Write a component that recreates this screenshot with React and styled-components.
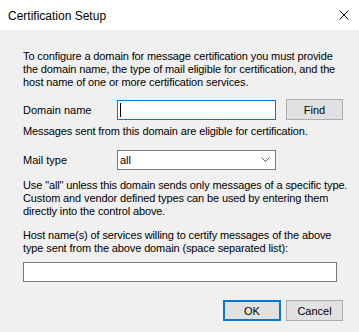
import React from 'react'
import styled, { createGlobalStyle } from 'styled-components'

const GlobalStyle = createGlobalStyle`
  html, body {
    margin: 0;
    padding: 0;
    background: #f0f0f0;
  }
  * {
    box-sizing: border-box;
  }
`

const CloseIcon = () => (
  <svg width="10" height="10" viewBox="0 0 10 10">
    <path d="M0.5 0.5 L9.5 9.5 M9.5 0.5 L0.5 9.5" stroke="#000" strokeWidth="1" fill="none" />
  </svg>
)

const Chevron = () => (
  <svg width="9" height="5" viewBox="0 0 9 5">
    <path d="M0.5 0.5 L4.5 4.5 L8.5 0.5" stroke="#555" strokeWidth="1" fill="none" />
  </svg>
)

// each paragraph is kept on the same line breaks as the dialog
const Lines = ({ top, lines }) => (
  <StyledText $top={top}>
    {lines.map((l, i) => <StyledLine key={i}>{l}</StyledLine>)}
  </StyledText>
)

const App = () => {
  return (
    <>
      <GlobalStyle />
      <StyledWindow>
        <StyledTitleBar>
          <StyledTitle>Certification Setup</StyledTitle>
          <StyledClose><CloseIcon /></StyledClose>
        </StyledTitleBar>
        <StyledBody>
          <Lines top={20} lines={[
            'To configure a domain for message certification you must provide',
            'the domain name, the type of mail eligible for certification, and the',
            'host name of one or more certification services.',
          ]} />

          <StyledRow $top={10}>
            <StyledLabel>Domain name</StyledLabel>
            <StyledField $focused>
              <StyledCaret />
            </StyledField>
            <StyledButton $side>Find</StyledButton>
          </StyledRow>

          <Lines top={5} lines={[
            'Messages sent from this domain are eligible for certification.',
          ]} />

          <StyledRow $top={11}>
            <StyledLabel>Mail type</StyledLabel>
            <StyledField>
              <StyledValue>all</StyledValue>
              <StyledDrop><Chevron /></StyledDrop>
            </StyledField>
          </StyledRow>

          <Lines top={9} lines={[
            'Use "all" unless this domain sends only messages of a specific type.',
            'Custom and vendor defined types can be used by entering them',
            'directly into the control above.',
          ]} />

          <Lines top={11} lines={[
            'Host name(s) of services willing to certify messages of the above',
            'type sent from the above domain (space separated list):',
          ]} />

          <StyledWideField />

          <StyledFooter>
            <StyledButton $primary>OK</StyledButton>
            <StyledButton>Cancel</StyledButton>
          </StyledFooter>
        </StyledBody>
      </StyledWindow>
    </>
  )
}

export default App

const StyledWindow = styled.div`
  width: 359px;
  height: 332px;
  display: flex;
  flex-direction: column;
  background: #f0f0f0;
  font-family: "Liberation Sans", Arial, sans-serif;
  font-size: 11px;
  color: #000;
  overflow: hidden;
`

const StyledTitleBar = styled.div`
  height: 30px;
  flex: none;
  background: #fff;
  display: flex;
  align-items: center;
  justify-content: space-between;
  padding: 0 10px 0 8px;
`

const StyledTitle = styled.div`
  font-size: 12px;
  padding-top: 1px;
`

const StyledClose = styled.div`
  display: flex;
  padding-bottom: 1px;
`

const StyledBody = styled.div`
  display: flex;
  flex-direction: column;
  padding: 0 16px 0 23px;
`

const StyledText = styled.div`
  margin-top: ${p => p.$top}px;
  line-height: 13px;
  letter-spacing: -0.12px;
`

const StyledLine = styled.div`
  white-space: nowrap;
`

const StyledRow = styled.div`
  margin-top: ${p => p.$top}px;
  display: flex;
  align-items: center;
  height: 21px;
`

const StyledLabel = styled.div`
  width: 94px;
`

const StyledField = styled.div`
  width: 159px;
  height: 20px;
  background: #fff;
  border: 1px solid ${p => p.$focused ? '#0078d7' : '#7a7a7a'};
  display: flex;
  align-items: center;
  padding: 0 4px 0 2px;
`

const StyledCaret = styled.span`
  width: 1px;
  height: 14px;
  background: #000;
`

const StyledValue = styled.span`
  flex: 1;
`

const StyledDrop = styled.span`
  display: flex;
  padding-right: 1px;
`

const StyledButton = styled.div`
  width: ${p => p.$primary ? 58 : 57}px;
  height: 21px;
  margin-left: ${p => p.$side ? 10 : 0}px;
  display: flex;
  align-items: center;
  justify-content: center;
  background: #e1e1e1;
  border: ${p => p.$primary ? '2px solid #0078d7' : '1px solid #adadad'};
`

const StyledWideField = styled.div`
  margin-top: 7px;
  width: 314px;
  height: 20px;
  background: #fff;
  border: 1px solid #7a7a7a;
`

const StyledFooter = styled.div`
  margin-top: 18px;
  display: flex;
  justify-content: flex-end;
  gap: 5px;
`
